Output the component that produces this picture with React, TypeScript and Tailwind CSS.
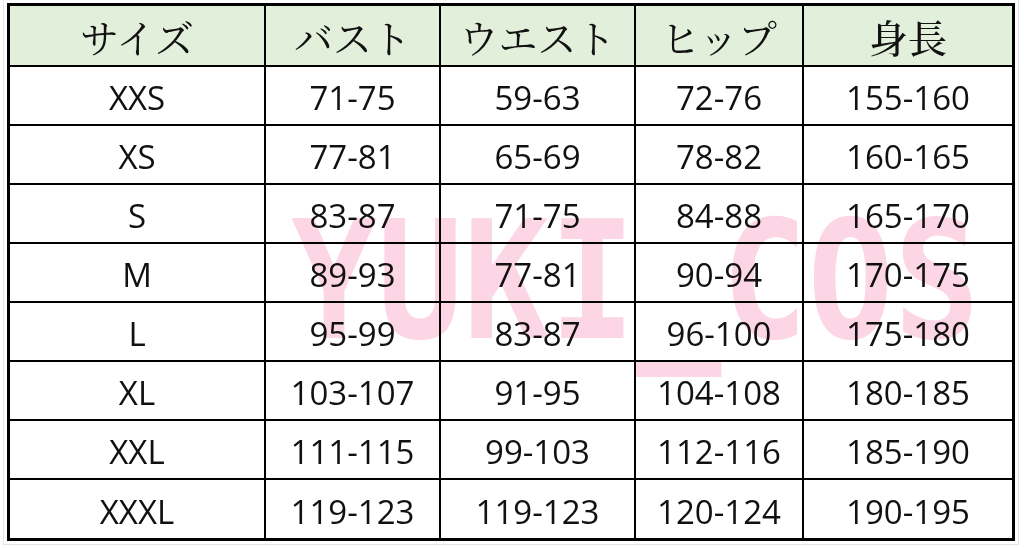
const headers = ["サイズ", "バスト", "ウエスト", "ヒップ", "身長"];

const rows = [
  ["XXS", "71-75", "59-63", "72-76", "155-160"],
  ["XS", "77-81", "65-69", "78-82", "160-165"],
  ["S", "83-87", "71-75", "84-88", "165-170"],
  ["M", "89-93", "77-81", "90-94", "170-175"],
  ["L", "95-99", "83-87", "96-100", "175-180"],
  ["XL", "103-107", "91-95", "104-108", "180-185"],
  ["XXL", "111-115", "99-103", "112-116", "185-190"],
  ["XXXL", "119-123", "119-123", "120-124", "190-195"],
];

const jpFont = {
  fontFamily: '"Noto Serif CJK JP", "Noto Sans CJK JP", serif',
};

export default function App() {
  return (
    <div className="w-[1024px] h-[548px] bg-white overflow-hidden">
      {/* faint spreadsheet gridlines around the table */}
      <div className="relative ml-[3px] w-[1016px] h-[545px] border-l border-r border-b border-[#e4e4e4] pl-[3px] pt-[3px]">
        <div className="w-[1008px] border-[3px] border-black grid grid-cols-[256px_175px_195px_168px_208px]">
          {/* Header row */}
          {headers.map((h, i) => (
            <div
              key={h}
              style={jpFont}
              className={`h-[61px] bg-[#e2efda] border-b-2 border-black flex items-center justify-center pt-[2px] text-[39px] text-[#111] leading-none ${
                i < 4 ? "border-r-2" : ""
              } ${i === 4 ? "font-medium" : "font-normal"}`}
            >
              {h}
            </div>
          ))}

          {/* Body rows */}
          {rows.map((r, ri) =>
            r.map((c, ci) => (
              <div
                key={`${ri}-${ci}`}
                className={`flex items-center justify-center pt-[4px] text-[33px] text-[#111] leading-none font-['Open_Sans',sans-serif] border-black ${
                  ri < rows.length - 1 ? "h-[59px] border-b-2" : "h-[58px]"
                } ${ci < 4 ? "border-r-2" : ""}`}
              >
                {c}
              </div>
            ))
          )}
        </div>

        {/* Watermark */}
        <div className="absolute left-[287px] top-[210px] pointer-events-none select-none mix-blend-multiply text-[#fcd6e5] text-[143px] font-bold leading-none font-['DejaVu_Sans_Mono',monospace] scale-y-[1.15]">
          YUKI_COS
        </div>
      </div>
    </div>
  );
}
